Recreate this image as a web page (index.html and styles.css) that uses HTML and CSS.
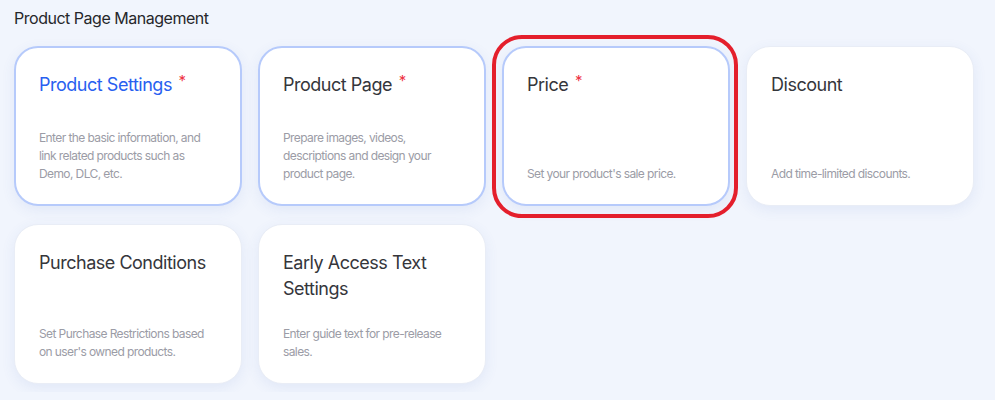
FILE: index.html
```html
<!DOCTYPE html>
<html lang="en">
<head>
    <meta charset="UTF-8">
    <meta name="viewport" content="width=device-width, initial-scale=1.0">
    <title>Product Page Management</title>
    <link rel="stylesheet" href="styles.css">
</head>
<body>
    <section class="manage">
        <h2 class="manage-title">Product Page Management</h2>

        <div class="card-grid">
            <a class="card card-active card-current" href="#settings">
                <h3 class="card-title">Product Settings <span class="req">*</span></h3>
                <p class="card-desc">Enter the basic information, and link related products such as Demo, DLC, etc.</p>
            </a>
            <a class="card card-active" href="#page">
                <h3 class="card-title">Product Page <span class="req">*</span></h3>
                <p class="card-desc">Prepare images, videos, descriptions and design your product page.</p>
            </a>
            <a class="card card-active card-marked" href="#price">
                <h3 class="card-title">Price <span class="req">*</span></h3>
                <p class="card-desc">Set your product's sale price.</p>
            </a>
            <a class="card" href="#discount">
                <h3 class="card-title">Discount</h3>
                <p class="card-desc">Add time-limited discounts.</p>
            </a>
            <a class="card" href="#conditions">
                <h3 class="card-title">Purchase Conditions</h3>
                <p class="card-desc">Set Purchase Restrictions based on user's owned products.</p>
            </a>
            <a class="card" href="#early-access">
                <h3 class="card-title">Early Access Text Settings</h3>
                <p class="card-desc">Enter guide text for pre-release sales.</p>
            </a>
        </div>
    </section>
</body>
</html>
```

FILE: styles.css
```css
body {
    font-family: Inter, "Noto Sans", Arial, sans-serif;
    background-color: #f1f5fd;
    margin: 0;
    padding: 0;
    letter-spacing: -0.03em;
}

.manage {
    padding: 8px 14px;
}

.manage-title {
    font-size: 16px;
    font-weight: 400;
    color: #26272b;
    margin: 0 0 18px 0;
    line-height: 20px;
}

.card-grid {
    display: grid;
    grid-template-columns: repeat(4, 228px);
    gap: 18px 16px;
}

.card {
    position: relative;
    box-sizing: border-box;
    height: 160px;
    display: flex;
    flex-direction: column;
    justify-content: space-between;
    padding: 25px 24px 22px 24px;
    background-color: white;
    border: 1px solid #e9edf6;
    border-radius: 24px;
    box-shadow: 0 4px 14px rgba(70, 100, 190, 0.09);
    text-decoration: none;
}

.card-active {
    border: 2px solid #b6cafb;
    padding: 24px 23px 21px 23px;
}

.card-title {
    margin: 0;
    font-size: 18px;
    font-weight: 400;
    line-height: 26px;
    color: #35363b;
}

.card-current .card-title {
    color: #2860f0;
}

.req {
    position: relative;
    top: -5px;
    color: #ee3344;
    font-size: 15px;
    margin-left: 2px;
}

.card-desc {
    margin: 0;
    font-size: 12px;
    line-height: 18px;
    color: #9b9ca6;
    letter-spacing: -0.05em;
    padding-right: 4px;
}

/* highlight box drawn around the price card */
.card-marked::after {
    content: "";
    position: absolute;
    top: -13px;
    left: -12px;
    right: -10px;
    bottom: -14px;
    border: 4px solid #e41f2c;
    border-radius: 30px;
    pointer-events: none;
}
```
